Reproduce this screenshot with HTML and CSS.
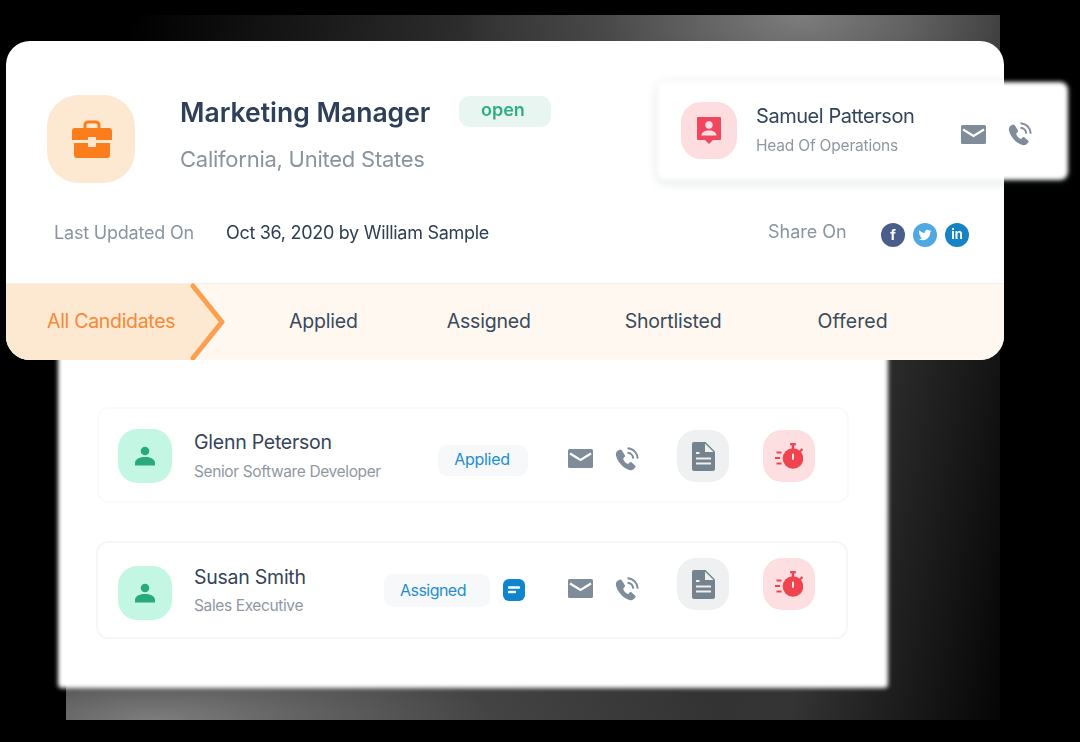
FILE: index.html
```html
<!DOCTYPE html>
<html lang="en">
<head>
<meta charset="utf-8">
<title>Marketing Manager</title>
<link rel="stylesheet" href="styles.css">
</head>
<body>
<svg class="defs" width="0" height="0" aria-hidden="true">
  <symbol id="mail" viewBox="0 0 25 19"><rect width="25" height="19" rx="1.5" fill="#7f8d9b"/><path d="M2 4.500l10.500 6.500L23 4.500" fill="none" stroke="#fff" stroke-width="2.200"/></symbol>
  <symbol id="phone" viewBox="0 0 24 24"><path fill="#7f8d9b" d="M2.500 3.800c-1.400 1.400-1.900 3-1.500 4.800 1.500 6.500 6.800 12.300 13.300 14.400 1.700.5 3.300.2 4.500-1l1.300-1.300c.6-.6.600-1.500 0-2.100l-3.500-3.200c-.6-.5-1.400-.5-2 .1l-1.200 1.200c-.3.300-.7.300-1 .1-1.800-1-3.300-2.700-4.100-4.600-.1-.3-.1-.7.200-1l1.100-1.100c.6-.6.600-1.400.1-2L6.600 3.100C6 2.400 5 2.300 4.300 3z"/><path fill="none" stroke="#7f8d9b" stroke-width="2" d="M12.500 1.200c5.700.3 10 4.800 10.300 10.400M12.500 5.800c3.100.2 5.500 2.600 5.700 5.800"/></symbol>
  <symbol id="person" viewBox="0 0 20 20"><circle cx="10" cy="5" r="4.300" fill="#2aa87e"/><path fill="#2aa87e" d="M0 19.500v-2.500c0-3.300 3.500-6 10-6s10 2.700 10 6v2.500z"/></symbol>
  <symbol id="doc" viewBox="0 0 23 29"><path fill="#75838f" d="M2 0h11.500L23 9.500V27a2 2 0 0 1-2 2H2a2 2 0 0 1-2-2V2a2 2 0 0 1 2-2z"/><path fill="#eef0f2" d="M13 1.500L21.500 10H13z"/><path stroke="#eef0f2" stroke-width="2" d="M4 11h3.500M4 16.500h15M4 21.500h15"/></symbol>
  <symbol id="timer" viewBox="0 0 28 26"><circle cx="18" cy="15.500" r="10.300" fill="#ef4450"/><rect x="15" y="0" width="6" height="2.500" rx="1" fill="#ef4450"/><rect x="16.800" y="2" width="2.400" height="4" fill="#ef4450"/><path stroke="#ef4450" stroke-width="2.200" d="M25 8.500l2.500-2.500M1.500 9.500h5M0 15h5M1.500 20.500h5"/><rect x="17" y="10.500" width="2" height="6.500" rx="1" fill="#fddfe1"/></symbol>
</svg>

<main class="stage">
  <div class="backdrop"></div>

  <section class="panel">
    <article class="row row-one">
      <div class="squircle avatar"><svg class="i-person"><use href="#person"/></svg></div>
      <div class="who who-wide">
        <h3 class="name">Glenn Peterson</h3>
        <p class="role">Senior Software Developer</p>
      </div>
      <span class="pill pill-applied">Applied</span>
      <svg class="i-mail"><use href="#mail"/></svg>
      <svg class="i-phone"><use href="#phone"/></svg>
      <div class="squircle box doc-box"><svg class="i-doc"><use href="#doc"/></svg></div>
      <div class="squircle box timer-box"><svg class="i-timer"><use href="#timer"/></svg></div>
    </article>
    <article class="row row-two">
      <div class="squircle avatar"><svg class="i-person"><use href="#person"/></svg></div>
      <div class="who who-narrow">
        <h3 class="name">Susan Smith</h3>
        <p class="role">Sales Executive</p>
      </div>
      <span class="pill pill-assigned">Assigned</span>
      <svg class="i-note" viewBox="0 0 22 22"><rect width="22" height="22" rx="6" fill="#0f84cf"/><path stroke="#fff" stroke-width="2.400" stroke-linecap="round" d="M6 8.500h10M6 13h6"/></svg>
      <svg class="i-mail"><use href="#mail"/></svg>
      <svg class="i-phone"><use href="#phone"/></svg>
      <div class="squircle box doc-box"><svg class="i-doc"><use href="#doc"/></svg></div>
      <div class="squircle box timer-box"><svg class="i-timer"><use href="#timer"/></svg></div>
    </article>
  </section>

  <section class="card">
    <header class="job">
      <div class="squircle job-icon">
        <svg class="i-case" viewBox="0 0 40 38"><path fill="none" stroke="#fb7d1c" stroke-width="3" d="M13 9V5a3 3 0 0 1 3-3h8a3 3 0 0 1 3 3v4"/><path fill="#fb7d1c" d="M3 8h34a3 3 0 0 1 3 3v9H24v-3h-8v3H0v-9a3 3 0 0 1 3-3zM2 23h14v4h8v-4h14v12a3 3 0 0 1-3 3H5a3 3 0 0 1-3-3z"/><rect x="17" y="18.500" width="6" height="7" fill="#fde6cf"/></svg>
      </div>
      <div class="job-text">
        <div class="job-title-line">
          <h1 class="job-title">Marketing Manager</h1>
          <span class="status">open</span>
        </div>
        <p class="job-place">California, United States</p>
      </div>
    </header>
    <div class="meta">
      <span class="meta-label">Last Updated On</span>
      <span class="meta-value">Oct 36, 2020 by William Sample</span>
      <span class="share-label">Share On</span>
      <div class="socials">
        <span class="social fb">f</span>
        <span class="social tw"><svg viewBox="0 0 24 24" class="i-bird"><path fill="#fff" d="M23 5c-.8.400-1.700.600-2.600.700.900-.600 1.600-1.400 2-2.500-.9.500-1.800.900-2.900 1.100a4.600 4.600 0 0 0-7.800 4.200C7.900 8.300 4.500 6.500 2.300 3.700c-1.200 2.100-.6 4.800 1.400 6.100-.7 0-1.400-.2-2-.6 0 2.200 1.500 4.200 3.700 4.600-.7.200-1.400.2-2.100.1.600 1.900 2.300 3.200 4.300 3.200A9.300 9.300 0 0 1 1 19c2.100 1.300 4.500 2 7 2 8.500 0 13.300-7.200 13-13.600.9-.6 1.600-1.400 2-2.400z"/></svg></span>
        <span class="social in">in</span>
      </div>
    </div>
    <nav class="tabs">
      <div class="tab-active">
        <span>All Candidates</span>
        <svg class="chevron" viewBox="0 0 36 78" preserveAspectRatio="none"><path d="M0 0h3l30 38L3 78H0z" fill="#fde8d2"/><path d="M3 3l29 36L3 75" fill="none" stroke="#fca050" stroke-width="5" stroke-linecap="round" stroke-linejoin="round"/></svg>
      </div>
      <a class="tab tab-applied">Applied</a>
      <a class="tab tab-assigned">Assigned</a>
      <a class="tab tab-short">Shortlisted</a>
      <a class="tab tab-offered">Offered</a>
    </nav>
  </section>

  <aside class="contact">
    <div class="squircle contact-avatar">
      <svg class="i-badge" viewBox="0 0 24 27"><path fill="#f0475f" d="M1 0h22a1 1 0 0 1 1 1v21a1 1 0 0 1-1 1h-7l-4 4-4-4H1a1 1 0 0 1-1-1V1a1 1 0 0 1 1-1z"/><circle cx="12" cy="8" r="3.700" fill="#fde0e3"/><path fill="#fde0e3" d="M4.500 18.500c0-3 3-5 7.500-5s7.500 2 7.500 5z"/></svg>
    </div>
    <div class="contact-text">
      <h2 class="contact-name">Samuel Patterson</h2>
      <p class="contact-role">Head Of Operations</p>
    </div>
    <svg class="i-mail"><use href="#mail"/></svg>
    <svg class="i-phone"><use href="#phone"/></svg>
  </aside>
</main>
</body>
</html>
```

FILE: styles.css
```css
* { box-sizing: border-box; margin: 0; padding: 0; }
html, body { width: 1080px; height: 742px; overflow: hidden; background: #000; }
body { font-family: "Inter", "Liberation Sans", sans-serif; color: #34445a; }
.defs { position: absolute; }
.stage { position: relative; width: 1080px; height: 742px; filter: blur(0.55px); }

.backdrop {
  position: absolute; left: 66px; top: 15px; width: 934px; height: 705px;
  background:
    radial-gradient(ellipse 340px 170px at 735px 0, rgba(125,125,125,1), rgba(90,90,90,.55) 60%, rgba(60,60,60,0) 100%),
    radial-gradient(ellipse 560px 130px at 90px 705px, rgba(125,125,125,1), rgba(80,80,80,.6) 60%, rgba(40,40,40,0) 100%),
    linear-gradient(100deg, #000 6%, #303030 40%, #343434 80%, #050505 100%);
}
.squircle { border-radius: 36%; display: flex; align-items: center; justify-content: center; flex: none; }

/* Back panel: the white sheet is a soft-edged layer behind its content */
.panel {
  position: absolute; left: 58px; top: 340px; width: 830px; height: 348px;
  padding: 67px 39px 0 39px; isolation: isolate;
}
.panel::before {
  content: ""; position: absolute; inset: 0; background: #fff; border-radius: 4px; filter: blur(2px); z-index: -1;
}
.row {
  display: flex; align-items: flex-start; width: 752px; height: 96px;
  border: 2px solid #f9fafa; border-radius: 12px; padding-left: 19px;
}
.row-one { padding-top: 20px; }
.row-two { margin-top: 38px; margin-left: -1px; height: 98px; border-color: #f5f6f7; padding: 23px 0 0 20px; }
.avatar { width: 54px; height: 54px; background: #c4f7e3; }
.i-person { width: 20px; height: 20px; }
.who { margin-left: 22px; }
.who-wide { width: 244px; }
.who-narrow { width: 190px; margin-top: -2px; }
.name { font-size: 19.500px; line-height: 26px; font-weight: 400; letter-spacing: -.25px; color: #34445a; white-space: nowrap; }
.role { font-size: 15.500px; line-height: 20px; letter-spacing: -.38px; color: #8f98a2; margin-top: 6px; white-space: nowrap; }
.who-wide .role { margin-top: 7px; }
.pill { display: block; background: #f6f8f9; border-radius: 9px; color: #1f8fd0; font-size: 16px; text-align: center; flex: none; }
.pill-applied { width: 90px; height: 31px; line-height: 29px; margin-top: 16px; letter-spacing: -.3px; padding-right: 2px; }
.pill-assigned { width: 106px; height: 33px; line-height: 33px; margin-top: 8px; letter-spacing: -.55px; padding-right: 8px; }
.i-note { width: 22px; height: 22px; margin: 13px 0 0 13px; flex: none; }
.i-mail { width: 25px; height: 19px; flex: none; }
.i-phone { width: 24px; height: 24px; flex: none; }
.row-one .i-mail { margin: 20px 0 0 40px; }
.row-one .i-phone { margin: 18px 0 0 22px; }
.row-two .i-mail { margin: 13px 0 0 43px; }
.row-two .i-phone { margin: 11px 0 0 22px; }
.box { width: 52px; height: 52px; }
.row-one .box { margin-top: 1px; }
.row-two .box { margin-top: -8px; }
.doc-box { background: #eef0f2; margin-left: 38px; }
.timer-box { background: #fddfe1; margin-left: 34px; }
.i-doc { width: 23px; height: 29px; }
.i-timer { width: 28px; height: 26px; }

/* Main card */
.card {
  position: absolute; left: 6px; top: 41px; width: 998px; height: 319px;
  background: #fff; border-radius: 24px; overflow: hidden;
  display: flex; flex-direction: column;
}
.job { display: flex; padding: 54px 0 0 41px; height: 163px; }
.job-icon { width: 88px; height: 88px; background: #fde8d2; }
.i-case { width: 40px; height: 38px; margin-left: 2px; }
.job-text { margin-left: 45px; }
.job-title-line { display: flex; align-items: flex-start; }
.job-title { font-size: 26.500px; line-height: 36px; font-weight: 600; color: #2d4057; white-space: nowrap; margin-top: -1px; }
.status {
  width: 92px; height: 31px; line-height: 27px; margin: 1px 0 0 29px; padding-right: 5px;
  background: #e8f5f0; border-radius: 10px; color: #2fae86; font-size: 18px; font-weight: 600; text-align: center;
}
.job-place { font-size: 22px; line-height: 30px; letter-spacing: -.25px; color: #8a949e; margin-top: 14px; white-space: nowrap; }
.meta { display: flex; align-items: center; height: 79px; padding: 0 0 22px 48px; }
.meta-label { font-size: 18px; letter-spacing: -.2px; color: #8a95a0; width: 172px; white-space: nowrap; }
.meta-value { font-size: 18px; letter-spacing: -.3px; color: #2f3e52; width: 542px; white-space: nowrap; }
.share-label { font-size: 18px; color: #8a95a0; width: 113px; white-space: nowrap; position: relative; top: -1px; }
.socials { display: flex; gap: 8px; position: relative; top: 2px; }
.social {
  width: 24px; height: 24px; border-radius: 50%; color: #fff; display: flex; align-items: center; justify-content: center;
  font-size: 14px; font-weight: 700; line-height: 1;
}
.fb { background: #4a5e8c; }
.tw { background: #4fa8e0; }
.in { background: #1484c6; font-size: 13px; }
.i-bird { width: 14px; height: 14px; }

.tabs { display: flex; align-items: center; flex: 1; background: #fff8f1; border-top: 1px solid #f3efe9; position: relative; }
.tab-active {
  position: relative; width: 184px; height: 100%; background: #fde8d2; color: #f58a35; font-size: 19.500px; letter-spacing: -.3px;
  display: flex; align-items: center; padding: 0 0 2px 41px; white-space: nowrap;
}
.chevron { position: absolute; left: 184px; top: -1px; width: 36px; height: 78px; }
.tab { font-size: 19.500px; letter-spacing: -.2px; color: #3a4a5c; white-space: nowrap; padding-bottom: 2px; }
.tab-applied { margin-left: 99px; }
.tab-assigned { margin-left: 89px; }
.tab-short { margin-left: 94px; letter-spacing: -.2px; }
.tab-offered { margin-left: 96px; letter-spacing: .1px; }

/* Floating contact: soft-edged sheet behind the content */
.contact {
  position: absolute; left: 658px; top: 82px; width: 410px; height: 98px;
  display: flex; align-items: flex-start; padding: 20px 0 0 23px; isolation: isolate;
}
.contact::before {
  content: ""; position: absolute; inset: 0; background: #fff; border-radius: 8px; filter: blur(2px); z-index: -1;
  box-shadow: 0 2px 8px 2px rgba(60,70,80,.12);
}
.contact-avatar { width: 56px; height: 57px; background: #fddde0; }
.i-badge { width: 24px; height: 27px; }
.contact-text { margin-left: 19px; width: 205px; }
.contact-name { font-size: 20px; line-height: 28px; letter-spacing: -.45px; font-weight: 400; color: #34445a; white-space: nowrap; }
.contact-role { font-size: 15.500px; line-height: 20px; letter-spacing: -.2px; color: #8f98a2; margin-top: 6px; white-space: nowrap; }
.contact .i-mail { margin-top: 23px; }
.contact .i-phone { margin: 20px 0 0 22px; }
```
